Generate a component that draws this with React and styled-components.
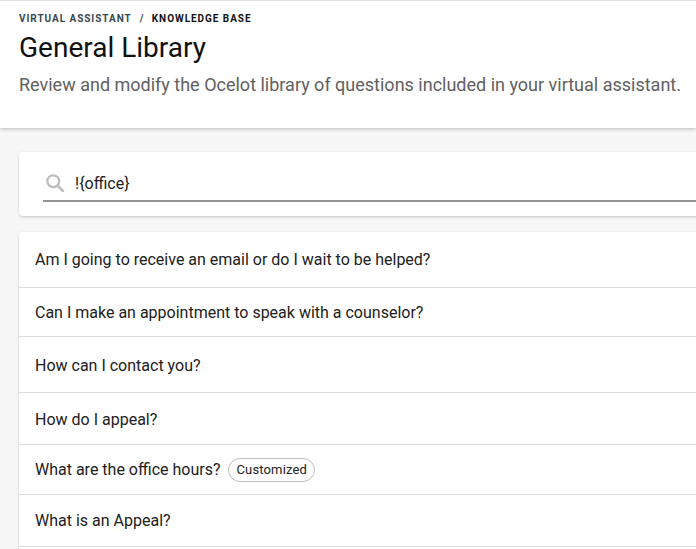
import styled, { createGlobalStyle } from 'styled-components';

const GlobalStyle = createGlobalStyle`
    html, body {
        margin: 0;
        height: 100%;
        overflow: hidden;
        background: #f7f7f7;
        font-family: Roboto, "Liberation Sans", sans-serif;
    }
`;

const questions = [
    { text: 'Am I going to receive an email or do I wait to be helped?', height: 55 },
    { text: 'Can I make an appointment to speak with a counselor?', height: 48 },
    { text: 'How can I contact you?', height: 53, top: 2 },
    { text: 'How do I appeal?', height: 49, top: 2 },
    { text: 'What are the office hours?', height: 49, customized: true },
    { text: 'What is an Appeal?', height: 51 },
    { text: '', height: 40 },
];

const SearchIcon = () => (
    <svg width="19" height="19" viewBox="0 0 20 20" fill="none" stroke="#bdbdbd" strokeWidth="2.3">
        <circle cx="7.6" cy="7.6" r="6.2" />
        <path d="M12.2 12.2 L18.6 18.6" strokeWidth="2.8" />
    </svg>
);

const App = () => (
    <Page>
        <GlobalStyle />
        <Header>
            <Breadcrumb>
                <span>Virtual Assistant</span>
                <Slash>/</Slash>
                <Current>Knowledge Base</Current>
            </Breadcrumb>
            <Title>General Library</Title>
            <Subtitle>Review and modify the Ocelot library of questions included in your virtual assistant.</Subtitle>
        </Header>
        <Content>
            <SearchCard>
                <SearchField>
                    <SearchIcon />
                    <SearchValue>!{'{'}office{'}'}</SearchValue>
                </SearchField>
            </SearchCard>
            <List>
                {questions.map(({ text, height, top, customized }) => (
                    <Row key={text} $height={height} $top={top || 0}>
                        {text}
                        {customized && <Chip>Customized</Chip>}
                    </Row>
                ))}
            </List>
        </Content>
    </Page>
);

export default App;

const Page = styled.div`
    width: 696px;
    height: 549px;
    overflow: hidden;
`;

const Header = styled.header`
    box-sizing: border-box;
    height: 128px;
    padding: 12px 19px 0;
    background: #fff;
    border-top: 1px solid #e4e4e4;
    box-shadow: 0 1px 4px rgba(0, 0, 0, 0.25);
`;

const Breadcrumb = styled.div`
    display: flex;
    align-items: center;
    height: 12px;
    font-size: 10px;
    line-height: 12px;
    font-weight: 700;
    letter-spacing: 0.95px;
    text-transform: uppercase;
    color: #37474f;
`;

const Slash = styled.span`
    margin: 0 7.5px 0 8px;
`;

const Current = styled.span`
    color: #111;
`;

const Title = styled.h1`
    margin: 5px 0 0;
    font-size: 28px;
    line-height: 36px;
    font-weight: 400;
    color: #111;
`;

const Subtitle = styled.p`
    margin: 7px 0 0;
    font-size: 18px;
    line-height: 24px;
    font-weight: 400;
    color: #616161;
    white-space: nowrap;
`;

const Content = styled.main`
    padding: 24px 0 0 19px;
`;

const SearchCard = styled.section`
    box-sizing: border-box;
    width: 720px;
    height: 64px;
    padding: 8px 0 0 24px;
    background: #fff;
    border-radius: 4px 0 0 4px;
    box-shadow: 0 1px 3px rgba(0, 0, 0, 0.2);
`;

const SearchField = styled.div`
    display: flex;
    align-items: center;
    box-sizing: border-box;
    height: 42px;
    padding: 6px 0 0 3px;
    border-bottom: 2px solid #949494;
`;

const SearchValue = styled.span`
    margin-left: 10px;
    font-size: 16px;
    color: #212121;
`;

const List = styled.section`
    width: 720px;
    margin-top: 16px;
    background: #fff;
    border-radius: 4px 0 0 4px;
    box-shadow: 0 1px 3px rgba(0, 0, 0, 0.2);
`;

const Row = styled.div`
    display: flex;
    align-items: center;
    box-sizing: content-box;
    height: ${props => props.$height}px;
    padding: ${props => props.$top}px 0 0 16px;
    font-size: 16px;
    color: #212121;
    border-bottom: 1px solid #dcdcdc;
`;

const Chip = styled.span`
    box-sizing: border-box;
    display: inline-flex;
    align-items: center;
    height: 24px;
    margin-left: 8px;
    padding: 0 7px 0 7px;
    font-size: 13px;
    letter-spacing: 0.15px;
    color: #212121;
    background: #fff;
    border: 1px solid #bdbdbd;
    border-radius: 12px;
`;
